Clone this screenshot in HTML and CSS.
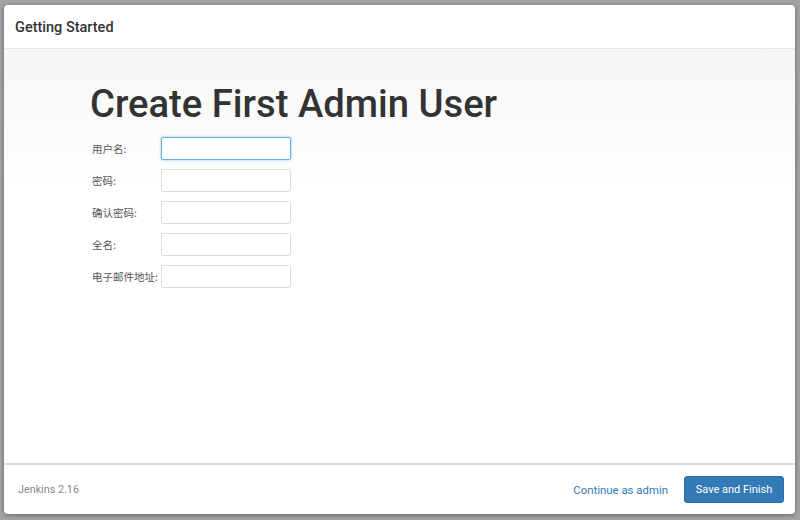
FILE: index.html
```html
<!DOCTYPE html>
<html>
<head>
<meta charset="utf-8">
<link rel="stylesheet" href="styles.css">
</head>
<body>
<div class="modal">
  <div class="modal-header">Getting Started</div>
  <div class="modal-body">
    <h1>Create First Admin User</h1>
    <div class="form">
      <div class="row"><label>用户名:</label><input class="focus" type="text"></div>
      <div class="row"><label>密码:</label><input type="password"></div>
      <div class="row"><label>确认密码:</label><input type="password"></div>
      <div class="row"><label>全名:</label><input type="text"></div>
      <div class="row"><label>电子邮件地址:</label><input type="text"></div>
    </div>
  </div>
  <div class="modal-footer">
    <span class="version">Jenkins 2.16</span>
    <div class="actions">
      <a class="link">Continue as admin</a>
      <button class="btn">Save and Finish</button>
    </div>
  </div>
</div>
</body>
</html>
```
FILE: styles.css
```css
html, body { margin: 0; padding: 0; }
body {
  width: 800px;
  height: 520px;
  background: #a3a3a3;
  font-family: Roboto, "Noto Sans CJK SC", sans-serif;
  padding: 5px 5px 6px 4px;
  box-sizing: border-box;
}
.modal {
  height: 509px;
  background: #fff;
  border-radius: 4px;
  display: flex;
  flex-direction: column;
  box-shadow: 0 1px 4px rgba(0,0,0,0.4);
  overflow: hidden;
}
.modal-header {
  height: 44px;
  border-bottom: 1px solid #e5e5e5;
  display: flex;
  align-items: center;
  padding: 2px 0 0 11px;
  box-sizing: border-box;
  font-size: 14.5px;
  font-weight: 500;
  color: #333;
  flex: none;
}
.modal-body {
  flex: 1;
  background: linear-gradient(#f6f6f6 0px, #fff 140px);
  padding: 30px 0 0 86px;
}
h1 {
  margin: 0 0 8px 0;
  font-size: 38.2px;
  font-weight: 500;
  color: #333;
  line-height: 50px;
}
.form { display: flex; flex-direction: column; gap: 9px; }
.row { display: flex; align-items: center; }
label {
  width: 71px;
  padding-left: 2px;
  box-sizing: border-box;
  font-size: 10.5px;
  color: #555;
  font-family: "Noto Sans CJK SC", sans-serif;
  white-space: nowrap;
}
input {
  width: 130px;
  height: 23px;
  box-sizing: border-box;
  border: 1px solid #ddd;
  border-radius: 2px;
  margin: 0;
  background: #fff;
  outline: none;
}
input.focus {
  border: 1px solid #66afe9;
  box-shadow: 0 0 3px rgba(102,175,233,0.7);
}
.modal-footer {
  height: 49px;
  flex: none;
  border-top: 2px solid #ddd;
  display: flex;
  align-items: center;
  justify-content: space-between;
  padding: 0 11px 0 14px;
}
.version { font-size: 10.8px; color: #888; }
.actions { display: flex; align-items: center; gap: 16px; }
.link { font-size: 11.4px; color: #337ab7; }
.btn {
  background: #337ab7;
  border: 1px solid #2e6da4;
  color: #fff;
  font-family: Roboto, sans-serif;
  font-size: 11px;
  border-radius: 3px;
  width: 100px;
  height: 27px;
  padding: 0;
}
```
